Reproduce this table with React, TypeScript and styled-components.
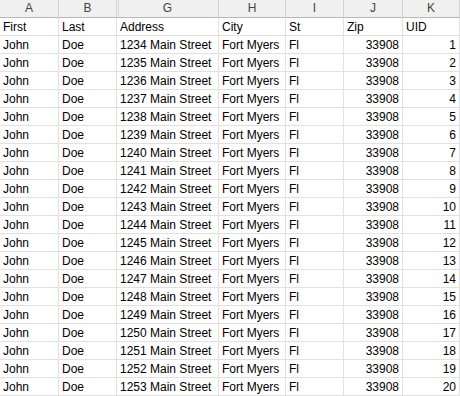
import * as React from "react";
import styled, { createGlobalStyle } from "styled-components";

const GlobalStyle = createGlobalStyle`
  html, body {
    margin: 0;
    padding: 0;
    background: #ffffff;
  }
  body {
    font-family: "Liberation Sans", Arial, sans-serif;
    overflow: hidden;
  }
`;

type Column = { letter: string; width: string; numeric?: boolean; hiddenBefore?: boolean };

const columns: Column[] = [
  { letter: "A", width: "59px" },
  { letter: "B", width: "58px" },
  { letter: "G", width: "102px", hiddenBefore: true },
  { letter: "H", width: "67px" },
  { letter: "I", width: "58px" },
  { letter: "J", width: "59px", numeric: true },
  { letter: "K", width: "1fr", numeric: true },
];

const Sheet = styled.div`
  display: grid;
  grid-template-columns: ${columns.map((c) => c.width).join(" ")};
  width: 460px;
`;

const HeaderCell = styled.div<{ $hiddenBefore?: boolean }>`
  box-sizing: border-box;
  height: 18px;
  background: #f0f0f0;
  border-right: 1px solid #d4d4d4;
  border-bottom: 1px solid #b8b8b8;
  color: #444444;
  font-size: 12px;
  line-height: 17px;
  text-align: center;
  box-shadow: ${(p) =>
    p.$hiddenBefore ? "inset 1px 0 0 #f0f0f0, inset 2px 0 0 #d4d4d4" : "none"};
`;

const Cell = styled.div<{ $numeric?: boolean }>`
  box-sizing: border-box;
  height: 18px;
  border-right: 1px solid #e1e1e1;
  border-bottom: 1px solid #e1e1e1;
  color: #000000;
  font-size: 12px;
  line-height: 18px;
  padding: 0 3px;
  white-space: nowrap;
  overflow: hidden;
  text-align: ${(p) => (p.$numeric ? "right" : "left")};
`;

const titles = ["First", "Last", "Address", "City", "St", "Zip", "UID"];

const rows = Array.from({ length: 20 }, (_, i) => [
  "John",
  "Doe",
  `${1234 + i} Main Street`,
  "Fort Myers",
  "Fl",
  "33908",
  String(i + 1),
]);

const App = () => {
  return (
    <>
      <GlobalStyle />
      <Sheet>
        {columns.map((col) => (
          <HeaderCell key={`head-${col.letter}`} $hiddenBefore={col.hiddenBefore}>
            {col.letter}
          </HeaderCell>
        ))}
        {titles.map((t, i) => (
          <Cell key={`title-${i}`}>{t}</Cell>
        ))}
        {rows.map((row, r) =>
          row.map((value, c) => (
            <Cell key={`cell-${r}-${c}`} $numeric={columns[c].numeric}>
              {value}
            </Cell>
          ))
        )}
      </Sheet>
    </>
  );
};

export default App;
